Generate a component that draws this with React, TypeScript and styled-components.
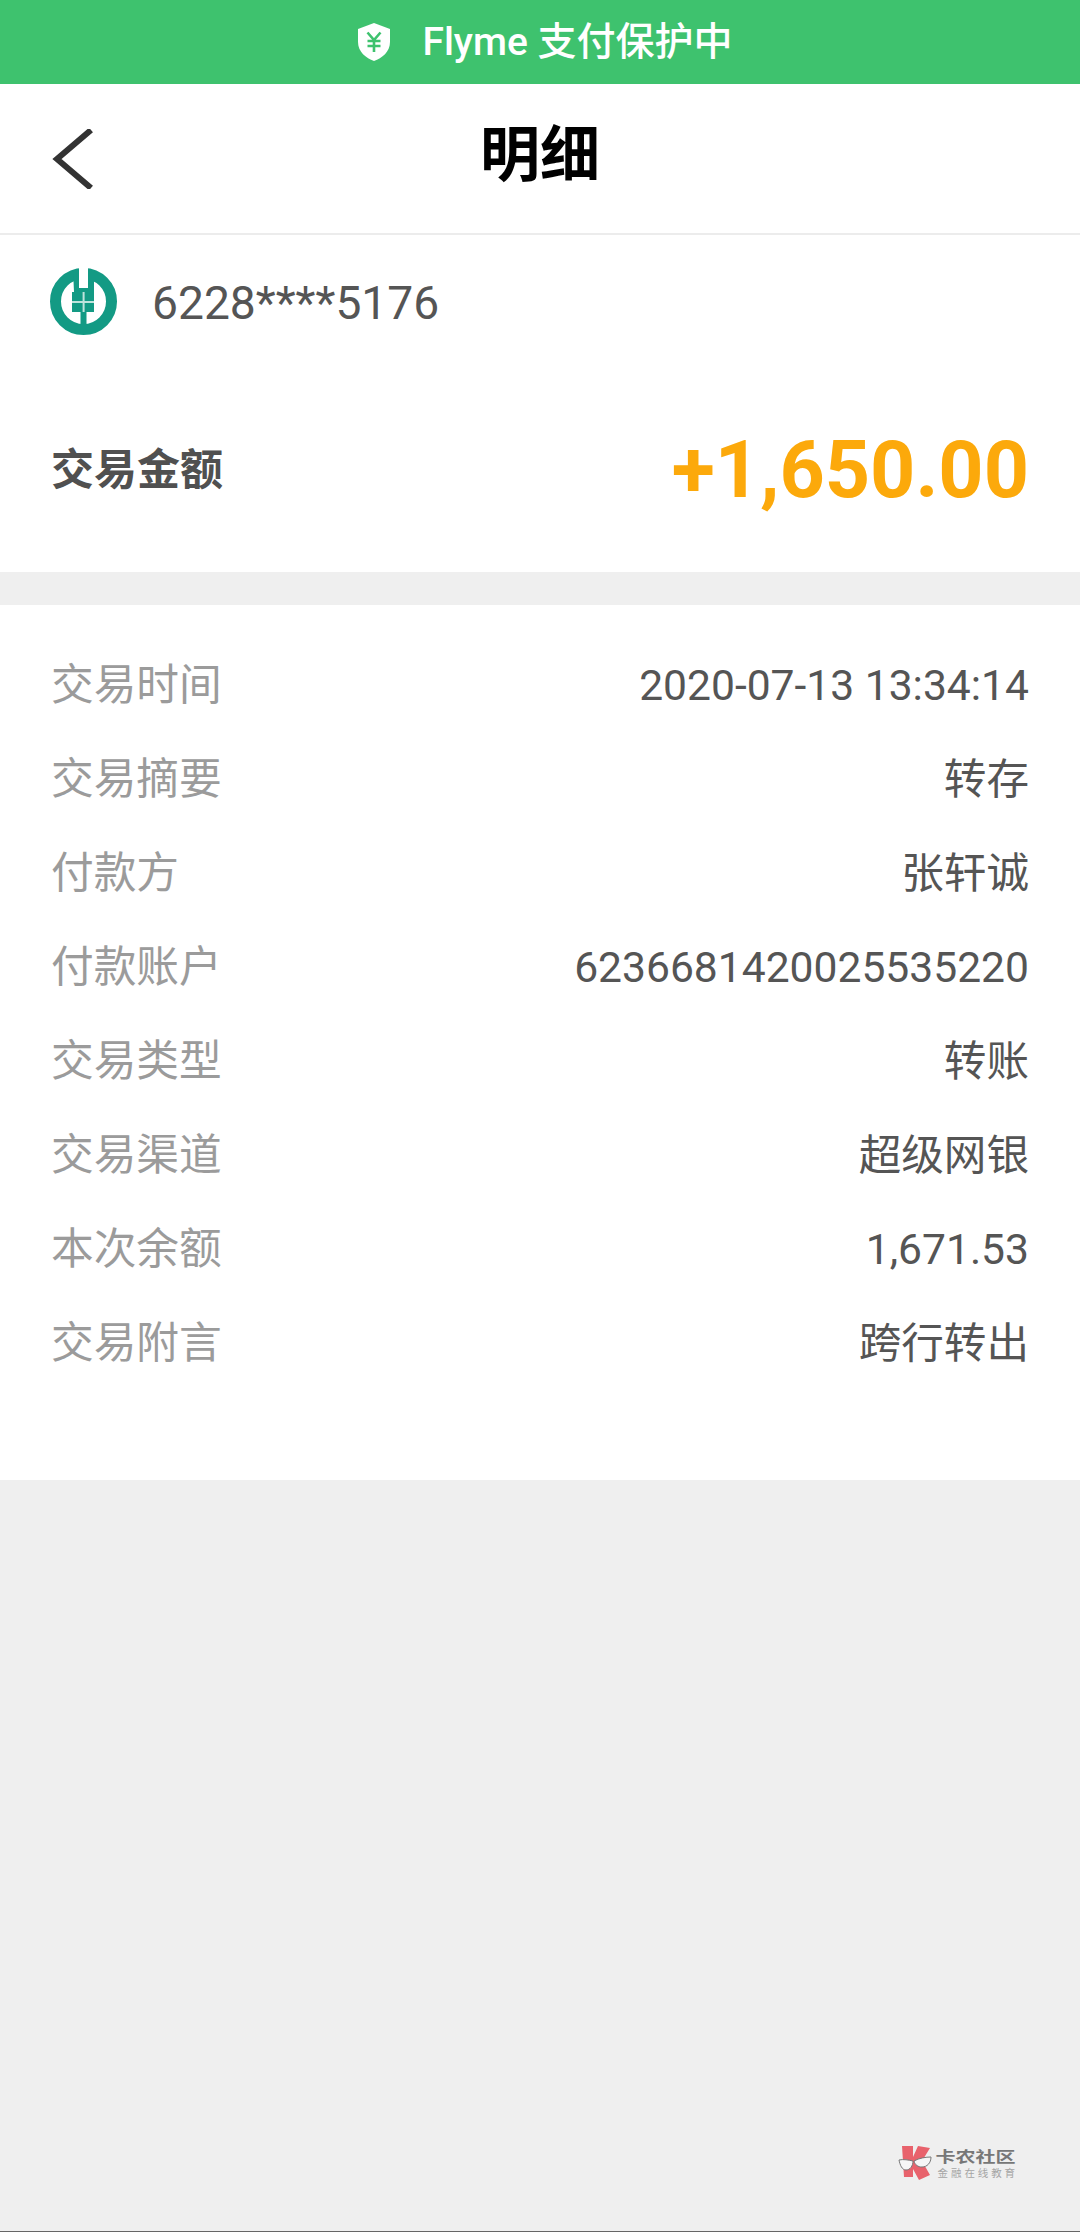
import React from "react";
import styled, { createGlobalStyle } from "styled-components";

const Global = createGlobalStyle`
  html, body { margin: 0; padding: 0; background: #efefef; }
  body { font-family: Roboto, "Noto Sans CJK SC", sans-serif; }
`;

const CJK = `Roboto, "Noto Sans CJK SC", sans-serif`;

const Page = styled.div`
  width: 1080px;
  height: 2232px;
  display: flex;
  flex-direction: column;
  background: #efefef;
  overflow: hidden;
`;

const ProtectBar = styled.div`
  height: 84px;
  flex: none;
  background: #3ec26e;
  display: flex;
  align-items: center;
  justify-content: center;
  gap: 31px;
  color: #fff;
  font: 500 39px/1 ${CJK};
  padding-left: 10px;
  box-sizing: border-box;
`;

const NavBar = styled.div`
  height: 151px;
  flex: none;
  background: #fff;
  border-bottom: 2px solid #ececec;
  box-sizing: border-box;
  display: grid;
  grid-template-columns: 150px 1fr 150px;
  align-items: center;
`;

const BackButton = styled.div`
  padding-left: 50px;
  display: flex;
  align-items: center;
`;

const Title = styled.h1`
  margin: 0 0 6px;
  text-align: center;
  font: 700 60px/1 ${CJK};
  color: #000;
`;

const Summary = styled.section`
  height: 337px;
  flex: none;
  background: #fff;
  display: flex;
  flex-direction: column;
  padding: 33px 51px 0 50px;
  box-sizing: border-box;
`;

const CardRow = styled.div`
  display: flex;
  align-items: center;
  gap: 34px;
  height: 68px;
`;

const CardNumber = styled.span`
  font: 400 46.2px/1 ${CJK};
  color: #555;
  padding-top: 2px;
`;

const AmountRow = styled.div`
  display: flex;
  justify-content: space-between;
  align-items: center;
  margin-top: 92px;
  height: 84px;
  padding-left: 1px;
`;

const AmountLabel = styled.span`
  font: 700 43px/1 ${CJK};
  color: #505050;
`;

const Amount = styled.span`
  font: 700 79px/1 ${CJK};
  color: #fca90b;
`;

const Details = styled.section`
  margin-top: 33px;
  height: 875px;
  flex: none;
  background: #fff;
  padding: 33px 51px 0 51px;
  box-sizing: border-box;
  display: flex;
  flex-direction: column;
`;

const Row = styled.div`
  height: 94px;
  flex: none;
  display: flex;
  align-items: center;
  justify-content: space-between;
`;

const Label = styled.span`
  font: 400 42.7px/1 ${CJK};
  color: #9b9b9b;
`;

const Value = styled.span`
  font: 400 42.6px/1 ${CJK};
  color: #555;
`;

const Filler = styled.div`
  flex: 1;
  display: flex;
  justify-content: flex-end;
  align-items: flex-end;
  padding: 0 62px 50px 0;
`;

const Watermark = styled.div`
  display: flex;
  align-items: center;
  gap: 4px;
`;

const MarkText = styled.div`
  display: flex;
  flex-direction: column;
  gap: 2px;
`;

const MarkTitle = styled.span`
  font: 700 20px/1 ${CJK};
  letter-spacing: 0;
  color: #777;
  white-space: nowrap;
  transform: scaleY(0.75);
`;

const MarkSub = styled.span`
  font: 400 10.5px/1 ${CJK};
  letter-spacing: 2.9px;
  color: #a5a5a5;
  white-space: nowrap;
  padding-left: 2px;
`;

const BottomLine = styled.div`
  height: 1px;
  flex: none;
  background: #666;
`;

const Shield = () => (
  <svg width="34" height="38" viewBox="0 0 34 38">
    <path d="M17 0 L33 6 V19 C33 29 25 35 17 38 C9 35 1 29 1 19 V6 Z" fill="#fff" />
    <path
      d="M10.5 9.5 L17 17 L23.5 9.5 M17 17 V29 M10.5 18 H23.5 M10.5 23 H23.5"
      stroke="#3ec26e"
      strokeWidth="2.6"
      fill="none"
    />
  </svg>
);

const Chevron = () => (
  <svg width="44" height="60" viewBox="0 0 44 60">
    <polyline points="41,1 7,30 41,59" fill="none" stroke="#333" strokeWidth="6" />
  </svg>
);

const AbcLogo = () => (
  <svg width="68" height="68" viewBox="0 0 68 68">
    <circle cx="33.5" cy="33.5" r="28" fill="none" stroke="#139a84" strokeWidth="11" />
    <path d="M23 2 H44 V44 H36.5 V66 H30.5 V44 H22 V24 H24 Z" fill="#139a84" />
    <rect x="29" y="0" width="9" height="20" fill="#fff" />
    <rect x="32.6" y="24" width="2" height="20" fill="#bfe3dc" />
    <rect x="22" y="33" width="22" height="2" fill="#bfe3dc" />
  </svg>
);

const KanongLogo = () => (
  <svg width="34" height="36" viewBox="0 0 34 36">
    <path d="M4 1 H15 V12 L20 1 L32 3 L24 16 L32 30 L21 35 L15 24 V32 H6 Z" fill="#e8626c" />
    <path d="M1 15 C5 14 11 15 15 16 C15 21 12 25 8 25 C4 25 2 20 1 15 Z" fill="#f6f6f6" stroke="#777" strokeWidth="1" />
    <path d="M16 16 C21 13 28 12 33 12 C33 18 29 22 24 22 C20 22 17 20 16 16 Z" fill="#f6f6f6" stroke="#777" strokeWidth="1" />
  </svg>
);

const rows: [string, string][] = [
  ["交易时间", "2020-07-13 13:34:14"],
  ["交易摘要", "转存"],
  ["付款方", "张轩诚"],
  ["付款账户", "6236681420025535220"],
  ["交易类型", "转账"],
  ["交易渠道", "超级网银"],
  ["本次余额", "1,671.53"],
  ["交易附言", "跨行转出"],
];

export default function App() {
  return (
    <Page>
      <Global />
      <ProtectBar>
        <Shield />
        <span>Flyme 支付保护中</span>
      </ProtectBar>
      <NavBar>
        <BackButton>
          <Chevron />
        </BackButton>
        <Title>明细</Title>
        <div />
      </NavBar>
      <Summary>
        <CardRow>
          <AbcLogo />
          <CardNumber>6228****5176</CardNumber>
        </CardRow>
        <AmountRow>
          <AmountLabel>交易金额</AmountLabel>
          <Amount>+1,650.00</Amount>
        </AmountRow>
      </Summary>
      <Details>
        {rows.map(([k, v]) => (
          <Row key={k}>
            <Label>{k}</Label>
            <Value>{v}</Value>
          </Row>
        ))}
      </Details>
      <Filler>
        <Watermark>
          <KanongLogo />
          <MarkText>
            <MarkTitle>卡农社区</MarkTitle>
            <MarkSub>金融在线教育</MarkSub>
          </MarkText>
        </Watermark>
      </Filler>
      <BottomLine />
    </Page>
  );
}
